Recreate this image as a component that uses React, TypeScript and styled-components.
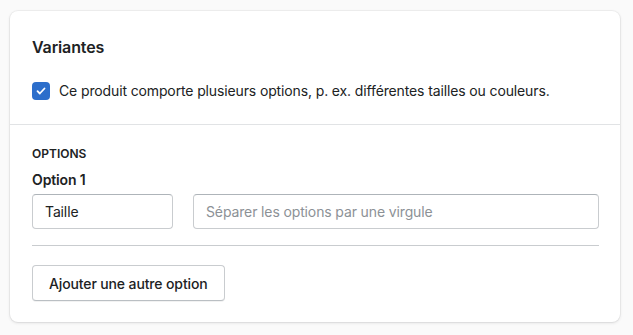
import React from "react";
import styled, { createGlobalStyle } from "styled-components";

const Global = createGlobalStyle`
  html, body { margin: 0; padding: 0; background: #fafafa; }
  body { font-family: Inter, "Noto Sans", sans-serif; color: #202223; -webkit-font-smoothing: antialiased; letter-spacing: -0.13px; }
  * { box-sizing: border-box; }
`;

const Page = styled.div`
  padding: 11px 13px 13px 10px;
`;

const Card = styled.div`
  background: #fff;
  border-radius: 8px;
  box-shadow: 0 0 0 1px rgba(63, 63, 68, 0.05), 0 1px 3px 0 rgba(63, 63, 68, 0.15);
  height: 311px;
`;

const Section = styled.div<{ $top?: boolean }>`
  padding: ${(p) => (p.$top ? "24px 22px 23px 22px" : "21px 21px 21px 22px")};
  border-top: ${(p) => (p.$top ? "none" : "1px solid #e1e3e5")};
`;

const Title = styled.h2`
  margin: 0;
  font-size: 16px;
  font-weight: 600;
  line-height: 24px;
`;

const CheckRow = styled.label`
  display: flex;
  align-items: center;
  gap: 9px;
  margin-top: 22px;
  font-size: 14px;
  line-height: 20px;
`;

const Box = styled.span`
  width: 18px;
  height: 18px;
  border-radius: 4px;
  background: #2c6ecb;
  display: inline-flex;
  align-items: center;
  justify-content: center;
  flex: none;
`;

const Label = styled.div`
  font-size: 12px;
  font-weight: 600;
  line-height: 16px;
  text-transform: uppercase;
  letter-spacing: 0;
`;

const FieldLabel = styled.div`
  margin-top: 8px;
  font-size: 14px;
  font-weight: 600;
  line-height: 20px;
`;

const Row = styled.div`
  display: flex;
  gap: 20px;
  margin-top: 4px;
`;

const Input = styled.div<{ $grow?: boolean; $placeholder?: boolean }>`
  height: 35px;
  width: ${(p) => (p.$grow ? "auto" : "141px")};
  flex: ${(p) => (p.$grow ? "1" : "none")};
  border: 1px solid #c9cccf;
  border-top-color: #aeb4b9;
  border-radius: 4px;
  padding: 0 12px;
  display: flex;
  align-items: center;
  font-size: 14px;
  color: ${(p) => (p.$placeholder ? "#8c9196" : "#202223")};
`;

const Divider = styled.hr`
  border: none;
  border-top: 1px solid #c9cccf;
  margin: 16px 0 19px;
`;

const Button = styled.button`
  height: 36px;
  padding: 0 16px;
  border: 1px solid #c9cccf;
  border-bottom-color: #babfc3;
  border-radius: 4px;
  background: #fff;
  font-family: inherit;
  font-size: 14px;
  font-weight: 500;
  letter-spacing: -0.13px;
  color: #202223;
  box-shadow: 0 1px 0 rgba(0, 0, 0, 0.05);
`;

export default function App() {
  return (
    <>
      <Global />
      <Page>
        <Card>
          <Section $top>
            <Title>Variantes</Title>
            <CheckRow>
              <Box>
                <svg width="12" height="12" viewBox="0 0 12 12" fill="none">
                  <path d="M2.5 6.2l2.3 2.3 4.7-5" stroke="#fff" strokeWidth="1.8" strokeLinecap="round" strokeLinejoin="round" />
                </svg>
              </Box>
              Ce produit comporte plusieurs options, p. ex. différentes tailles ou couleurs.
            </CheckRow>
          </Section>
          <Section>
            <Label>Options</Label>
            <FieldLabel>Option 1</FieldLabel>
            <Row>
              <Input>Taille</Input>
              <Input $grow $placeholder>Séparer les options par une virgule</Input>
            </Row>
            <Divider />
            <Button>Ajouter une autre option</Button>
          </Section>
        </Card>
      </Page>
    </>
  );
}
